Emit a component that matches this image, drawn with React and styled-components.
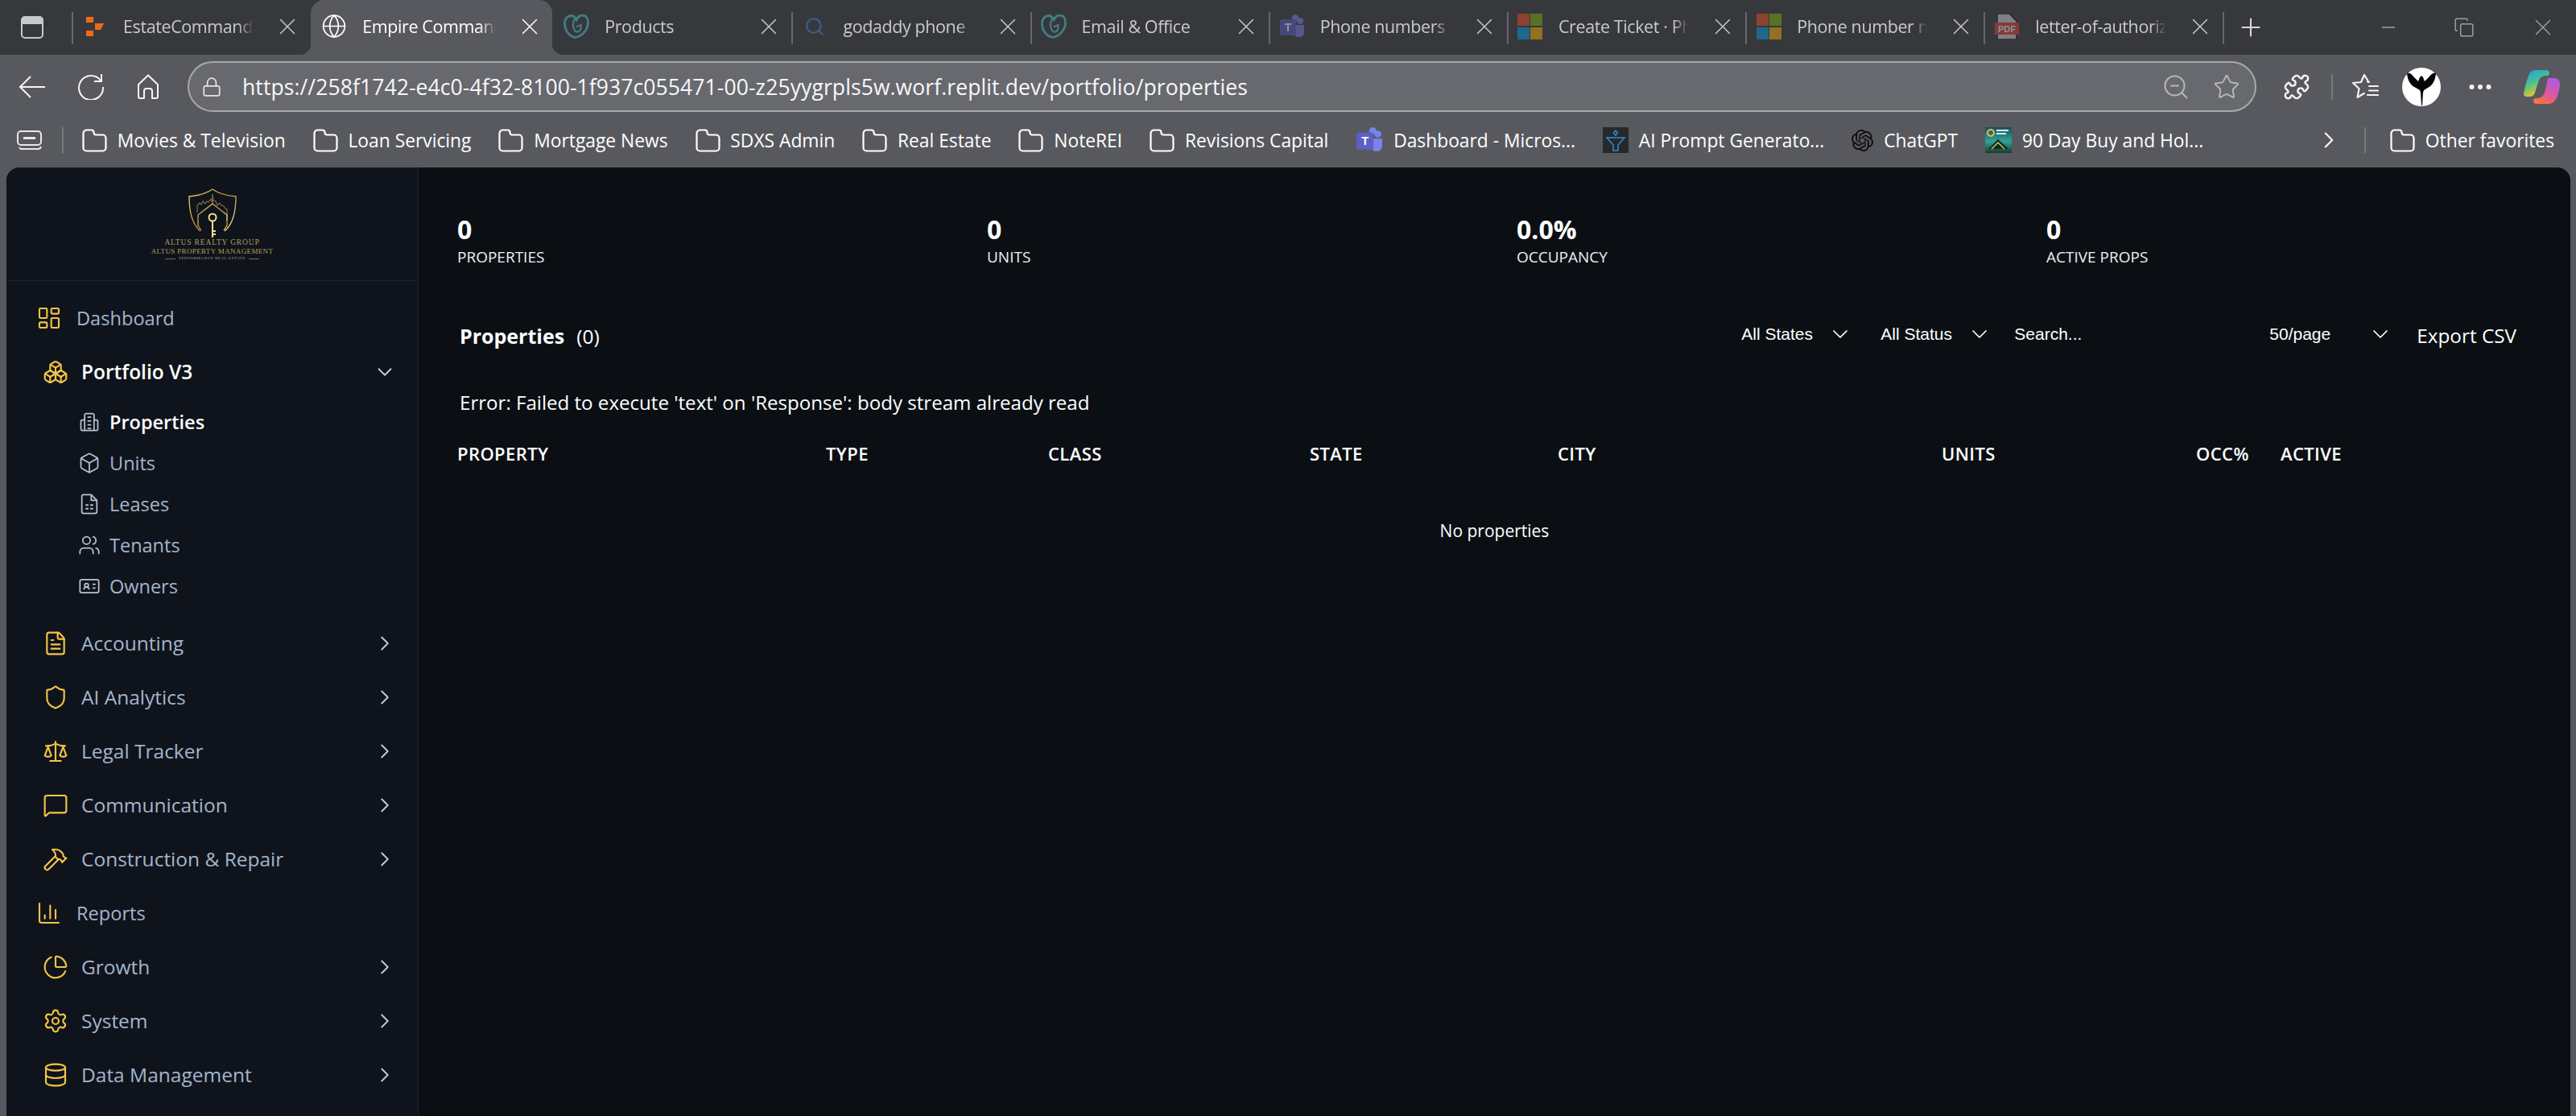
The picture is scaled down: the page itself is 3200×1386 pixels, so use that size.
import React from 'react';
import styled, { createGlobalStyle } from 'styled-components';
import {
  Boxes, Box, ChevronDown, ChevronRight, Database, FileText, Globe, Hammer, IdCard, LayoutDashboard,
  Lock, MessageSquare, PieChart, Plus, Scale, Search, Settings, Shield, Star, Users, X, ZoomOut,
  ChartColumn, Puzzle, Minus, Copy, MoreHorizontal,
} from 'lucide-react';
import { SiOpenai } from 'react-icons/si';

const GlobalStyle = createGlobalStyle`
  html, body { margin: 0; padding: 0; background: #58595e; }
  body { font-family: 'Open Sans', sans-serif; }
  * { box-sizing: border-box; }
`;

const Page = styled.div`
  width: 3200px;
  height: 1386px;
  display: flex;
  flex-direction: column;
  overflow: hidden;
`;

/* browser chrome */
const TabStrip = styled.div`
  height: 68px;
  background: #37383c;
  display: flex;
  flex-shrink: 0;
`;

const StripStart = styled.div`
  width: 89px;
  padding-left: 26px;
  display: flex;
  align-items: center;
`;

const Tab = styled.div`
  position: relative;
  width: ${p => (p.$active ? '300px' : '296.2px')};
  margin: ${p => (p.$active ? '0 1px' : '0')};
  padding: 0 11px 3px 13px;
  display: flex;
  align-items: center;
  gap: 19px;
  background: ${p => (p.$active ? '#58595e' : 'transparent')};
  border-radius: ${p => (p.$active ? '16px 16px 0 0' : '0')};
  color: ${p => (p.$active ? '#ffffff' : '#c9cacc')};

  &::before {
    content: '';
    position: absolute;
    left: 0;
    top: 15px;
    bottom: 13px;
    width: 2px;
    background: ${p => (p.$divider ? '#66676b' : 'transparent')};
  }
`;

const Flare = styled.span`
  position: absolute;
  bottom: 0;
  ${p => (p.$side === 'left' ? 'left: -14px;' : 'right: -14px;')}
  width: 14px;
  height: 14px;
  background: radial-gradient(circle at ${p => (p.$side === 'left' ? '0 0' : '100% 0')}, transparent 14px, #58595e 14.5px);
`;

const FaviconSlot = styled.span`
  width: 32px;
  height: 32px;
  flex-shrink: 0;
  display: flex;
  align-items: center;
  justify-content: center;
  opacity: ${p => (p.$dim ? 0.45 : 1)};
`;

const TabTitle = styled.span`
  flex: 1;
  min-width: 0;
  font-size: 21.5px;
  letter-spacing: -0.4px;
  line-height: 30px;
  white-space: nowrap;
  overflow: hidden;
  margin-right: 14px;
  -webkit-mask-image: linear-gradient(to right, #000 88%, transparent 100%);
  mask-image: linear-gradient(to right, #000 88%, transparent 100%);
`;

const CloseSlot = styled.span`
  display: flex;
  margin: 0 0 0 -8px;
  color: ${p => (p.$active ? '#ffffff' : '#c9cacc')};
`;

const NewTab = styled.div`
  position: relative;
  padding-left: 17px;
  display: flex;
  align-items: center;
  color: #d7d7d9;

  &::before {
    content: '';
    position: absolute;
    left: 0;
    top: 15px;
    bottom: 13px;
    width: 2px;
    background: #66676b;
  }
`;

const WindowControls = styled.div`
  margin-left: auto;
  padding-right: 24px;
  display: flex;
  align-items: center;
  gap: 68px;
  color: #9c9da0;
`;

const Toolbar = styled.div`
  height: 72px;
  background: #58595e;
  padding: 7px 20px 0 23px;
  display: flex;
  align-items: center;
  flex-shrink: 0;
  color: #f4f4f5;
`;

const ToolSlot = styled.span`
  display: flex;
  align-items: center;
  justify-content: center;
  flex-shrink: 0;
  margin-left: ${p => p.$ml || 0}px;
`;

const ToolDivider = styled.span`
  width: 2px;
  height: 32px;
  background: #77787c;
  margin-left: 26px;
  flex-shrink: 0;
`;

const AddressBar = styled.div`
  flex: 1;
  height: 63px;
  margin-left: 35px;
  padding: 0 18px 0 15px;
  display: flex;
  align-items: center;
  background: #68696e;
  border: 2px solid #a8a9ac;
  border-radius: 32px;
`;

const Url = styled.span`
  flex: 1;
  margin-left: 25px;
  font-size: 26.5px;
  letter-spacing: 0.1px;
  color: #f7f8fa;
  white-space: nowrap;
`;

const AddressAction = styled.span`
  display: flex;
  margin-left: ${p => p.$ml || 0}px;
  color: #b5b6b9;
`;

const BookmarkBar = styled.div`
  height: 68px;
  background: #58595e;
  padding: 0 27px 0 21px;
  display: flex;
  align-items: center;
  flex-shrink: 0;
  color: #ffffff;
`;

const BarDivider = styled.span`
  width: 2px;
  height: 32px;
  background: #77787c;
  flex-shrink: 0;
  margin: 0 ${p => p.$after || 23}px 0 ${p => p.$before || 24}px;
`;

const Bookmark = styled.div`
  display: flex;
  align-items: center;
  gap: 12.8px;
  margin-right: ${p => (p.$last ? 0 : 34)}px;
  font-size: 22.8px;
  white-space: nowrap;
`;

const BarEnd = styled.div`
  margin-left: auto;
  display: flex;
  align-items: center;
`;

/* app */
const AppFrame = styled.div`
  flex: 1;
  min-height: 0;
  margin: 0 7px 0 8px;
  display: flex;
  background: #0b0f14;
  border-radius: 16px 16px 0 0;
  overflow: hidden;
`;

const Sidebar = styled.aside`
  width: 512px;
  flex-shrink: 0;
  background: #0f141c;
  border-right: 1px solid #20262f;
`;

const LogoBlock = styled.div`
  height: 141px;
  padding-top: 26px;
  border-bottom: 1px solid #20262f;
  display: flex;
  flex-direction: column;
  align-items: center;
  font-family: 'Liberation Serif', serif;
  color: #b89a5e;
`;

const LogoLine = styled.div`
  font-size: ${p => p.$size}px;
  letter-spacing: ${p => p.$track}px;
  line-height: ${p => p.$lh}px;
  white-space: nowrap;
`;

const LogoTag = styled.div`
  display: flex;
  align-items: center;
  gap: 4px;
  font-size: 5px;
  line-height: 8px;
  letter-spacing: 0.55px;
  color: #a9a08c;

  &::before, &::after {
    content: '';
    width: 13px;
    height: 1px;
    background: #6f6a5d;
  }
`;

const Nav = styled.nav`
  padding-top: 12px;
`;

const NavRow = styled.div`
  height: 67px;
  display: flex;
  align-items: center;
  padding: 0 26px 0 ${p => (p.$plain ? 37 : 45)}px;
  gap: ${p => (p.$plain ? 18 : 16)}px;
  font-size: ${p => (p.$plain ? 23.6 : 24.5)}px;
  font-weight: ${p => (p.$active ? 600 : 400)};
  color: ${p => (p.$active ? '#ffffff' : '#a5b4cb')};
  white-space: nowrap;

  > svg:first-child { color: #f6c445; flex-shrink: 0; }
`;

const NavChevron = styled.span`
  margin-left: auto;
  display: flex;
  color: #c3cad5;
`;

const SubList = styled.div`
  margin: 3px 0 12px;
`;

const SubRow = styled.div`
  height: 51px;
  display: flex;
  align-items: center;
  gap: 11px;
  padding-left: 89px;
  font-size: 23.5px;
  font-weight: ${p => (p.$active ? 600 : 400)};
  color: ${p => (p.$active ? '#ffffff' : '#a5b4cb')};

  > svg:first-child { color: #b7c2d2; flex-shrink: 0; }
`;

const Main = styled.main`
  flex: 1;
  min-width: 0;
  padding: 58px 67px 0 48px;
  color: #ffffff;
`;

const Stats = styled.div`
  display: grid;
  grid-template-columns: repeat(4, 658px);
`;

const Stat = styled.div`
  display: flex;
  flex-direction: column;
`;

const StatValue = styled.div`
  font-size: 32px;
  line-height: 38px;
  font-weight: 700;
`;

const StatLabel = styled.div`
  margin-top: 2px;
  font-size: 19px;
  line-height: 26px;
  color: #eef0f2;
`;

const TitleRow = styled.div`
  margin-top: 62px;
  height: 46px;
  padding-left: 3px;
  display: flex;
  align-items: center;
`;

const Title = styled.span`
  font-size: 25px;
  font-weight: 700;
  margin-right: 15px;
`;

const Count = styled.span`
  font-size: 24.5px;
`;

const Filters = styled.div`
  margin-left: auto;
  display: flex;
  align-items: center;
  font-family: 'Liberation Sans', Arial, sans-serif;
  font-size: 21px;
  transform: translateY(-2px);
`;

const FilterSelect = styled.div`
  width: ${p => p.$w}px;
  display: flex;
  align-items: center;
  justify-content: space-between;
  margin-right: ${p => p.$mr}px;
`;

const SearchText = styled.div`
  width: 317px;
`;

const ExportButton = styled.div`
  font-size: 24.3px;
  line-height: 46px;
  margin-left: 29px;
`;

const ErrorText = styled.div`
  margin-top: 38px;
  padding-left: 3px;
  font-size: 24.1px;
  line-height: 44px;
`;

const TableHead = styled.div`
  margin-top: 19px;
  display: grid;
  grid-template-columns: 458px 276px 325px 308px 477px 316px 105px auto;
  font-size: 22px;
  letter-spacing: 0.4px;
  font-weight: 600;
  line-height: 44px;
`;

const EmptyRow = styled.div`
  margin: 52px -67px 0 -48px;
  text-align: center;
  font-size: 21px;
  line-height: 44px;
`;

/* small drawings */
const Folder = () => (
  <svg width="31" height="29" viewBox="0 0 31 29" fill="none" stroke="currentColor" strokeWidth="2.2" strokeLinejoin="round">
    <path d="M1.500 5.500a4 4 0 0 1 4-4h6a3 3 0 0 1 3 3 3 3 0 0 0 3 3h8a4 4 0 0 1 4 4v12a4 4 0 0 1-4 4h-20a4 4 0 0 1-4-4z" />
  </svg>
);

const BackIcon = () => (
  <svg width="33" height="28" viewBox="0 0 33 28" fill="none" stroke="currentColor" strokeWidth="2">
    <path d="M33 14H2M15 1 2 14l13 13" />
  </svg>
);

const ReloadIcon = () => (
  <svg width="34" height="32" viewBox="0 0 34 32" fill="none" stroke="currentColor" strokeWidth="2">
    <path d="M29 8a15 15 0 1 0 3 8" />
    <path d="M30 0v9h-9" />
  </svg>
);

const HomeIcon = () => (
  <svg width="28" height="31" viewBox="0 0 28 31" fill="none" stroke="currentColor" strokeWidth="2" strokeLinejoin="round">
    <path d="M2 13 14 1.500 26 13v15a2 2 0 0 1-2 2h-5v-9a3 3 0 0 0-3-3h-4a3 3 0 0 0-3 3v9H4a2 2 0 0 1-2-2z" />
  </svg>
);

const FavoritesIcon = () => (
  <svg width="34" height="34" viewBox="0 0 34 34" fill="none" stroke="currentColor" strokeWidth="2.2" strokeLinejoin="round">
    <path d="M21 10 16 2l-4 9-10 1 7.500 7-2 11 9-5.500" />
    <path d="M20 10.500l2 .5M22 16h11M22 21.500h11M20 27h13" strokeLinecap="round" />
  </svg>
);

const SidebarToggle = () => (
  <svg width="28" height="28" viewBox="0 0 28 28" fill="none" stroke="#c7c8ca" strokeWidth="2">
    <rect x="1" y="1" width="26" height="26" rx="4" />
    <path d="M1 6a5 5 0 0 1 5-5h16a5 5 0 0 1 5 5v3H1z" fill="#c7c8ca" />
  </svg>
);

const CollectionsIcon = () => (
  <svg width="32" height="24" viewBox="0 0 32 24" fill="none" stroke="#e8e8e9" strokeWidth="2">
    <rect x="1" y="1" width="29" height="17" rx="4" />
    <path d="M8 9.500h15" strokeWidth="3" />
    <path d="M3 21a3 3 0 0 0 3 2h20a4 4 0 0 0 4-3" />
  </svg>
);

const EstateMark = () => (
  <svg width="22" height="24" viewBox="0 0 22 24" fill="#f06a1a">
    <path d="M0 0h9v7H0zM11 8h11l-4 8H11zM0 17h9v7H0z" />
  </svg>
);

const HeartMark = () => (
  <svg width="32" height="30" viewBox="0 0 32 30" fill="none" stroke="#55d0dc" strokeWidth="2.8" strokeLinecap="round">
    <path d="M15 28.500C7 27 1.500 20 1.500 11c0-6 4-9.500 8-9.500 3 0 5 2 6.500 5 2-4 4.500-5.500 7.500-5.500 4.500 0 7 4 7 9 0 8-6 16-15.500 18.500z" />
    <path d="M14 5c-2.500 5-2.500 11 0 15 2.500 3 7 1.500 7.500-3 .2-1.500 0-3 0-4l-5 2" strokeWidth="2.200" />
  </svg>
);

const TeamsMark = ({ size = 32 }) => (
  <svg width={size} height={size} viewBox="0 0 32 32">
    <circle cx="26" cy="9" r="4" fill="#7b83eb" />
    <path d="M18 14h13v9a6 6 0 0 1-6 6h-3l-4-3z" fill="#7b83eb" />
    <circle cx="20" cy="5" r="4" fill="#7b83eb" />
    <rect x="1" y="7" width="20" height="20" rx="2" fill="#5b5fc7" />
    <text x="11" y="22" textAnchor="middle" fontSize="14" fontWeight="700" fontFamily="'Liberation Sans', sans-serif" fill="#ffffff">T</text>
  </svg>
);

const MsMark = () => (
  <svg width="31" height="32" viewBox="0 0 31 32">
    <path fill="#f25022" d="M0 0h15v15H0z" />
    <path fill="#7fba00" d="M16 0h15v15H16z" />
    <path fill="#00a4ef" d="M0 17h15v15H0z" />
    <path fill="#ffb900" d="M16 17h15v15H16z" />
  </svg>
);

const PdfMark = () => (
  <svg width="30" height="32" viewBox="0 0 30 32">
    <path d="M3 0h15l9 9v23H3z" fill="#d8d8d8" stroke="#111" strokeWidth="1.500" />
    <rect x="0" y="11" width="30" height="15" fill="#e3403a" />
    <text x="15" y="23" textAnchor="middle" fontSize="11" fontWeight="700" fontFamily="'Liberation Sans', sans-serif" fill="#ffffff">PDF</text>
  </svg>
);

const PromptMark = () => (
  <svg width="32" height="32" viewBox="0 0 32 32" fill="none" stroke="#2f8fd0" strokeWidth="1.500">
    <rect width="32" height="32" fill="#26282b" stroke="none" />
    <path d="M16 4l2.500 3-2.500 3-2.500-3z" />
    <path d="M5 13h22l-8 9v7h-6v-7z" />
  </svg>
);

const BookCover = () => (
  <svg width="33" height="32" viewBox="0 0 33 32">
    <defs>
      <linearGradient id="coverBg" x1="0" y1="0" x2="0" y2="1">
        <stop offset="0" stopColor="#1c4d5e" />
        <stop offset="0.55" stopColor="#2fa39a" />
        <stop offset="1" stopColor="#1a3b2c" />
      </linearGradient>
    </defs>
    <rect width="33" height="32" fill="url(#coverBg)" />
    <circle cx="7" cy="7" r="4" fill="none" stroke="#e7c33a" strokeWidth="2" />
    <path d="M14 4h15M14 8h12" stroke="#d5eef0" strokeWidth="2" />
    <path d="M4 27 16 15l13 12z" fill="#0f2b2a" />
    <path d="M8 27l8-8 8 8" fill="none" stroke="#d7c24c" strokeWidth="1.500" />
  </svg>
);

const PhoenixAvatar = () => (
  <svg width="48" height="48" viewBox="0 0 48 48">
    <circle cx="24" cy="24" r="24" fill="#ffffff" />
    <path fill="#050505" d="M6 7c3-1 6 1 8 4l6 6 2-5 2-2 2 2 2 5 6-6c2-3 5-5 8-4-1 8-3 14-10 18l-5 3-1 3-1 16h-1l-1-16-1-3-5-3C9 21 7 15 6 7z" />
  </svg>
);

const CopilotMark = () => (
  <svg width="45" height="42" viewBox="0 0 45 42">
    <defs>
      <linearGradient id="coLeft" x1="0" y1="0" x2="0.4" y2="1">
        <stop offset="0" stopColor="#1b9de8" />
        <stop offset="0.55" stopColor="#4cc38a" />
        <stop offset="1" stopColor="#f2c230" />
      </linearGradient>
      <linearGradient id="coRight" x1="0.7" y1="0" x2="0.2" y2="1">
        <stop offset="0" stopColor="#b05ce0" />
        <stop offset="0.55" stopColor="#e0559f" />
        <stop offset="1" stopColor="#f77a2f" />
      </linearGradient>
    </defs>
    <path fill="url(#coLeft)" d="M14 0h14c3 0 4 2 4 4 0 1-1 3-3 3-6 0-9 2-11 8l-4 13c-1 3-3 5-7 5H3c-2 0-3-2-3-4 2-9 4-18 7-24 1-3 4-5 7-5z" />
    <path fill="url(#coRight)" d="M31 10h8c3 0 6 3 6 7 0 4-1 9-3 15-2 6-6 10-11 10H16c-3 0-4-2-4-4 0-1 1-3 3-3 6 0 9-2 11-7l3-12c0-3 1-6 2-6z" />
  </svg>
);

const PropertiesIcon = () => (
  <svg width="28" height="28" viewBox="0 0 24 24" fill="none" stroke="currentColor" strokeWidth="1.500" strokeLinejoin="round">
    <path d="M7 21V5a2 2 0 0 1 2-2h6a2 2 0 0 1 2 2v16" />
    <path d="M7 10H4.500A1.500 1.500 0 0 0 3 11.500v8A1.500 1.500 0 0 0 4.500 21h15a1.500 1.500 0 0 0 1.500-1.500v-8A1.500 1.500 0 0 0 19.500 10H17" />
    <path d="M10 7h4M10 11h4M10 15h4M10 19h4" />
  </svg>
);

const LeaseIcon = () => (
  <svg width="28" height="28" viewBox="0 0 24 24" fill="none" stroke="currentColor" strokeWidth="1.500" strokeLinejoin="round">
    <path d="M14 2H6a2 2 0 0 0-2 2v16a2 2 0 0 0 2 2h12a2 2 0 0 0 2-2V8z" />
    <path d="M14 2v6h6" />
    <path d="M8 13h3M13 13h3M8 17h3M13 17h3" strokeWidth="1.700" />
  </svg>
);

const ShieldLogo = () => (
  <svg width="60" height="62" viewBox="0 0 60 62" fill="none">
    <defs>
      <linearGradient id="goldLine" x1="0" y1="0" x2="1" y2="1">
        <stop offset="0" stopColor="#f2cf74" />
        <stop offset="0.5" stopColor="#b88a35" />
        <stop offset="1" stopColor="#f6e08e" />
      </linearGradient>
    </defs>
    <path d="M30 1C23 6 12 9 1 10c0 18 3 34 14 43M30 1c7 5 18 8 29 9 0 18-3 34-14 43" stroke="url(#goldLine)" strokeWidth="1.400" />
    <path d="M11 30V21l3-3 2 2 2-4 3 3 2-3 2 1 3-4 2 5v-11l1 8 3 1 2 5 3-3 2 3 3 1 2 3 2 1v9" stroke="#8d7445" strokeWidth="1.100" />
    <path d="M12 40V33L30 19l18 14v7" stroke="url(#goldLine)" strokeWidth="1.400" />
    <circle cx="30" cy="36" r="4.500" stroke="#f6e08e" strokeWidth="2" />
    <path d="M30 41v20M30 53h4M30 57h4" stroke="#f6e08e" strokeWidth="2" />
    <path d="M12 40v6l4 6M48 40v6l-4 6" stroke="url(#goldLine)" strokeWidth="1.200" />
  </svg>
);

const tabs = [
  { title: 'EstateCommand', icon: <EstateMark />, divider: true },
  { title: 'Empire Command', icon: <Globe size={33} strokeWidth={1.3} color="#ffffff" />, active: true },
  { title: 'Products', icon: <HeartMark />, dim: true },
  { title: 'godaddy phone', icon: <Search size={26} strokeWidth={2.2} color="#3f86d8" />, dim: true, divider: true },
  { title: 'Email & Office', icon: <HeartMark />, dim: true, divider: true },
  { title: 'Phone numbers', icon: <TeamsMark />, dim: true, divider: true },
  { title: 'Create Ticket · Phone', icon: <MsMark />, dim: true, divider: true },
  { title: 'Phone number n', icon: <MsMark />, dim: true, divider: true },
  { title: 'letter-of-authorization', icon: <PdfMark />, dim: true, divider: true },
];

const bookmarks = [
  { label: 'Movies & Television', icon: <Folder /> },
  { label: 'Loan Servicing', icon: <Folder /> },
  { label: 'Mortgage News', icon: <Folder /> },
  { label: 'SDXS Admin', icon: <Folder /> },
  { label: 'Real Estate', icon: <Folder /> },
  { label: 'NoteREI', icon: <Folder /> },
  { label: 'Revisions Capital', icon: <Folder /> },
  { label: 'Dashboard - Micros...', icon: <TeamsMark size={34} /> },
  { label: 'AI Prompt Generato...', icon: <PromptMark /> },
  { label: 'ChatGPT', icon: <SiOpenai size={27} color="#0c0c0c" /> },
  { label: '90 Day Buy and Hol...', icon: <BookCover /> },
];

const subItems = [
  { label: 'Properties', icon: <PropertiesIcon />, active: true },
  { label: 'Units', icon: <Box size={28} strokeWidth={1.5} /> },
  { label: 'Leases', icon: <LeaseIcon /> },
  { label: 'Tenants', icon: <Users size={28} strokeWidth={1.5} /> },
  { label: 'Owners', icon: <IdCard size={28} strokeWidth={1.5} /> },
];

const groups = [
  { label: 'Accounting', Icon: FileText },
  { label: 'AI Analytics', Icon: Shield },
  { label: 'Legal Tracker', Icon: Scale },
  { label: 'Communication', Icon: MessageSquare },
  { label: 'Construction & Repair', Icon: Hammer },
  { label: 'Reports', Icon: ChartColumn, plain: true },
  { label: 'Growth', Icon: PieChart },
  { label: 'System', Icon: Settings },
  { label: 'Data Management', Icon: Database },
];

const stats = [
  { value: '0', label: 'PROPERTIES' },
  { value: '0', label: 'UNITS' },
  { value: '0.0%', label: 'OCCUPANCY' },
  { value: '0', label: 'ACTIVE PROPS' },
];

const columns = ['PROPERTY', 'TYPE', 'CLASS', 'STATE', 'CITY', 'UNITS', 'OCC%', 'ACTIVE'];

const Chevron = () => <ChevronDown size={32} strokeWidth={1.3} />;

export default function App() {
  return (
    <Page>
      <GlobalStyle />
      <TabStrip>
        <StripStart><SidebarToggle /></StripStart>
        {tabs.map(tab => (
          <Tab key={tab.title} $active={tab.active} $divider={tab.divider}>
            {tab.active && <Flare $side="left" />}
            {tab.active && <Flare $side="right" />}
            <FaviconSlot $dim={tab.dim}>{tab.icon}</FaviconSlot>
            <TabTitle>{tab.title}</TabTitle>
            <CloseSlot $active={tab.active}><X size={34} strokeWidth={1} /></CloseSlot>
          </Tab>
        ))}
        <NewTab><Plus size={36} strokeWidth={1.4} /></NewTab>
        <WindowControls>
          <Minus size={26} strokeWidth={1.4} />
          <Copy size={26} strokeWidth={1.4} />
          <X size={34} strokeWidth={1} />
        </WindowControls>
      </TabStrip>

      <Toolbar>
        <ToolSlot><BackIcon /></ToolSlot>
        <ToolSlot $ml={40}><ReloadIcon /></ToolSlot>
        <ToolSlot $ml={40}><HomeIcon /></ToolSlot>
        <AddressBar>
          <Lock size={26} strokeWidth={1.6} color="#e4e4e6" />
          <Url>https://258f1742-e4c0-4f32-8100-1f937c055471-00-z25yygrpls5w.worf.replit.dev/portfolio/properties</Url>
          <AddressAction><ZoomOut size={36} strokeWidth={1.4} /></AddressAction>
          <AddressAction $ml={28}><Star size={34} strokeWidth={1.4} /></AddressAction>
        </AddressBar>
        <ToolSlot $ml={33}><Puzzle size={34} strokeWidth={1.7} /></ToolSlot>
        <ToolDivider />
        <ToolSlot $ml={23}><FavoritesIcon /></ToolSlot>
        <ToolSlot $ml={29}><PhoenixAvatar /></ToolSlot>
        <ToolSlot $ml={31}><MoreHorizontal size={36} strokeWidth={2} /></ToolSlot>
        <ToolSlot $ml={36}><CopilotMark /></ToolSlot>
      </Toolbar>

      <BookmarkBar>
        <CollectionsIcon />
        <BarDivider />
        {bookmarks.map(item => (
          <Bookmark key={item.label}>
            {item.icon}
            {item.label}
          </Bookmark>
        ))}
        <BarEnd>
          <ChevronRight size={34} strokeWidth={1.4} />
          <BarDivider $before={27} $after={30} />
          <Bookmark $last>
            <Folder />
            Other favorites
          </Bookmark>
        </BarEnd>
      </BookmarkBar>

      <AppFrame>
        <Sidebar>
          <LogoBlock>
            <ShieldLogo />
            <LogoLine $size={9.5} $track={0.85} $lh={11}>ALTUS REALTY GROUP</LogoLine>
            <LogoLine $size={9} $track={0.35} $lh={10}>ALTUS PROPERTY MANAGEMENT</LogoLine>
            <LogoTag>PERFORMANCE REAL ESTATE</LogoTag>
          </LogoBlock>
          <Nav>
            <NavRow $plain>
              <LayoutDashboard size={32} strokeWidth={1.6} />
              Dashboard
            </NavRow>
            <NavRow $active>
              <Boxes size={32} strokeWidth={1.6} />
              Portfolio V3
              <NavChevron><ChevronDown size={30} strokeWidth={1.5} /></NavChevron>
            </NavRow>
            <SubList>
              {subItems.map(item => (
                <SubRow key={item.label} $active={item.active}>
                  {item.icon}
                  {item.label}
                </SubRow>
              ))}
            </SubList>
            {groups.map(({ label, Icon, plain }) => (
              <NavRow key={label} $plain={plain}>
                <Icon size={32} strokeWidth={1.6} />
                {label}
                {!plain && <NavChevron><ChevronRight size={30} strokeWidth={1.5} /></NavChevron>}
              </NavRow>
            ))}
          </Nav>
        </Sidebar>

        <Main>
          <Stats>
            {stats.map(stat => (
              <Stat key={stat.label}>
                <StatValue>{stat.value}</StatValue>
                <StatLabel>{stat.label}</StatLabel>
              </Stat>
            ))}
          </Stats>
          <TitleRow>
            <Title>Properties</Title>
            <Count>(0)</Count>
            <Filters>
              <FilterSelect $w={138.5} $mr={34.5}>All States <Chevron /></FilterSelect>
              <FilterSelect $w={139} $mr={27}>All Status <Chevron /></FilterSelect>
              <SearchText>Search...</SearchText>
              <FilterSelect $w={154} $mr={0}>50/page <Chevron /></FilterSelect>
            </Filters>
            <ExportButton>Export CSV</ExportButton>
          </TitleRow>
          <ErrorText>Error: Failed to execute 'text' on 'Response': body stream already read</ErrorText>
          <TableHead>
            {columns.map(col => <span key={col}>{col}</span>)}
          </TableHead>
          <EmptyRow>No properties</EmptyRow>
        </Main>
      </AppFrame>
    </Page>
  );
}
